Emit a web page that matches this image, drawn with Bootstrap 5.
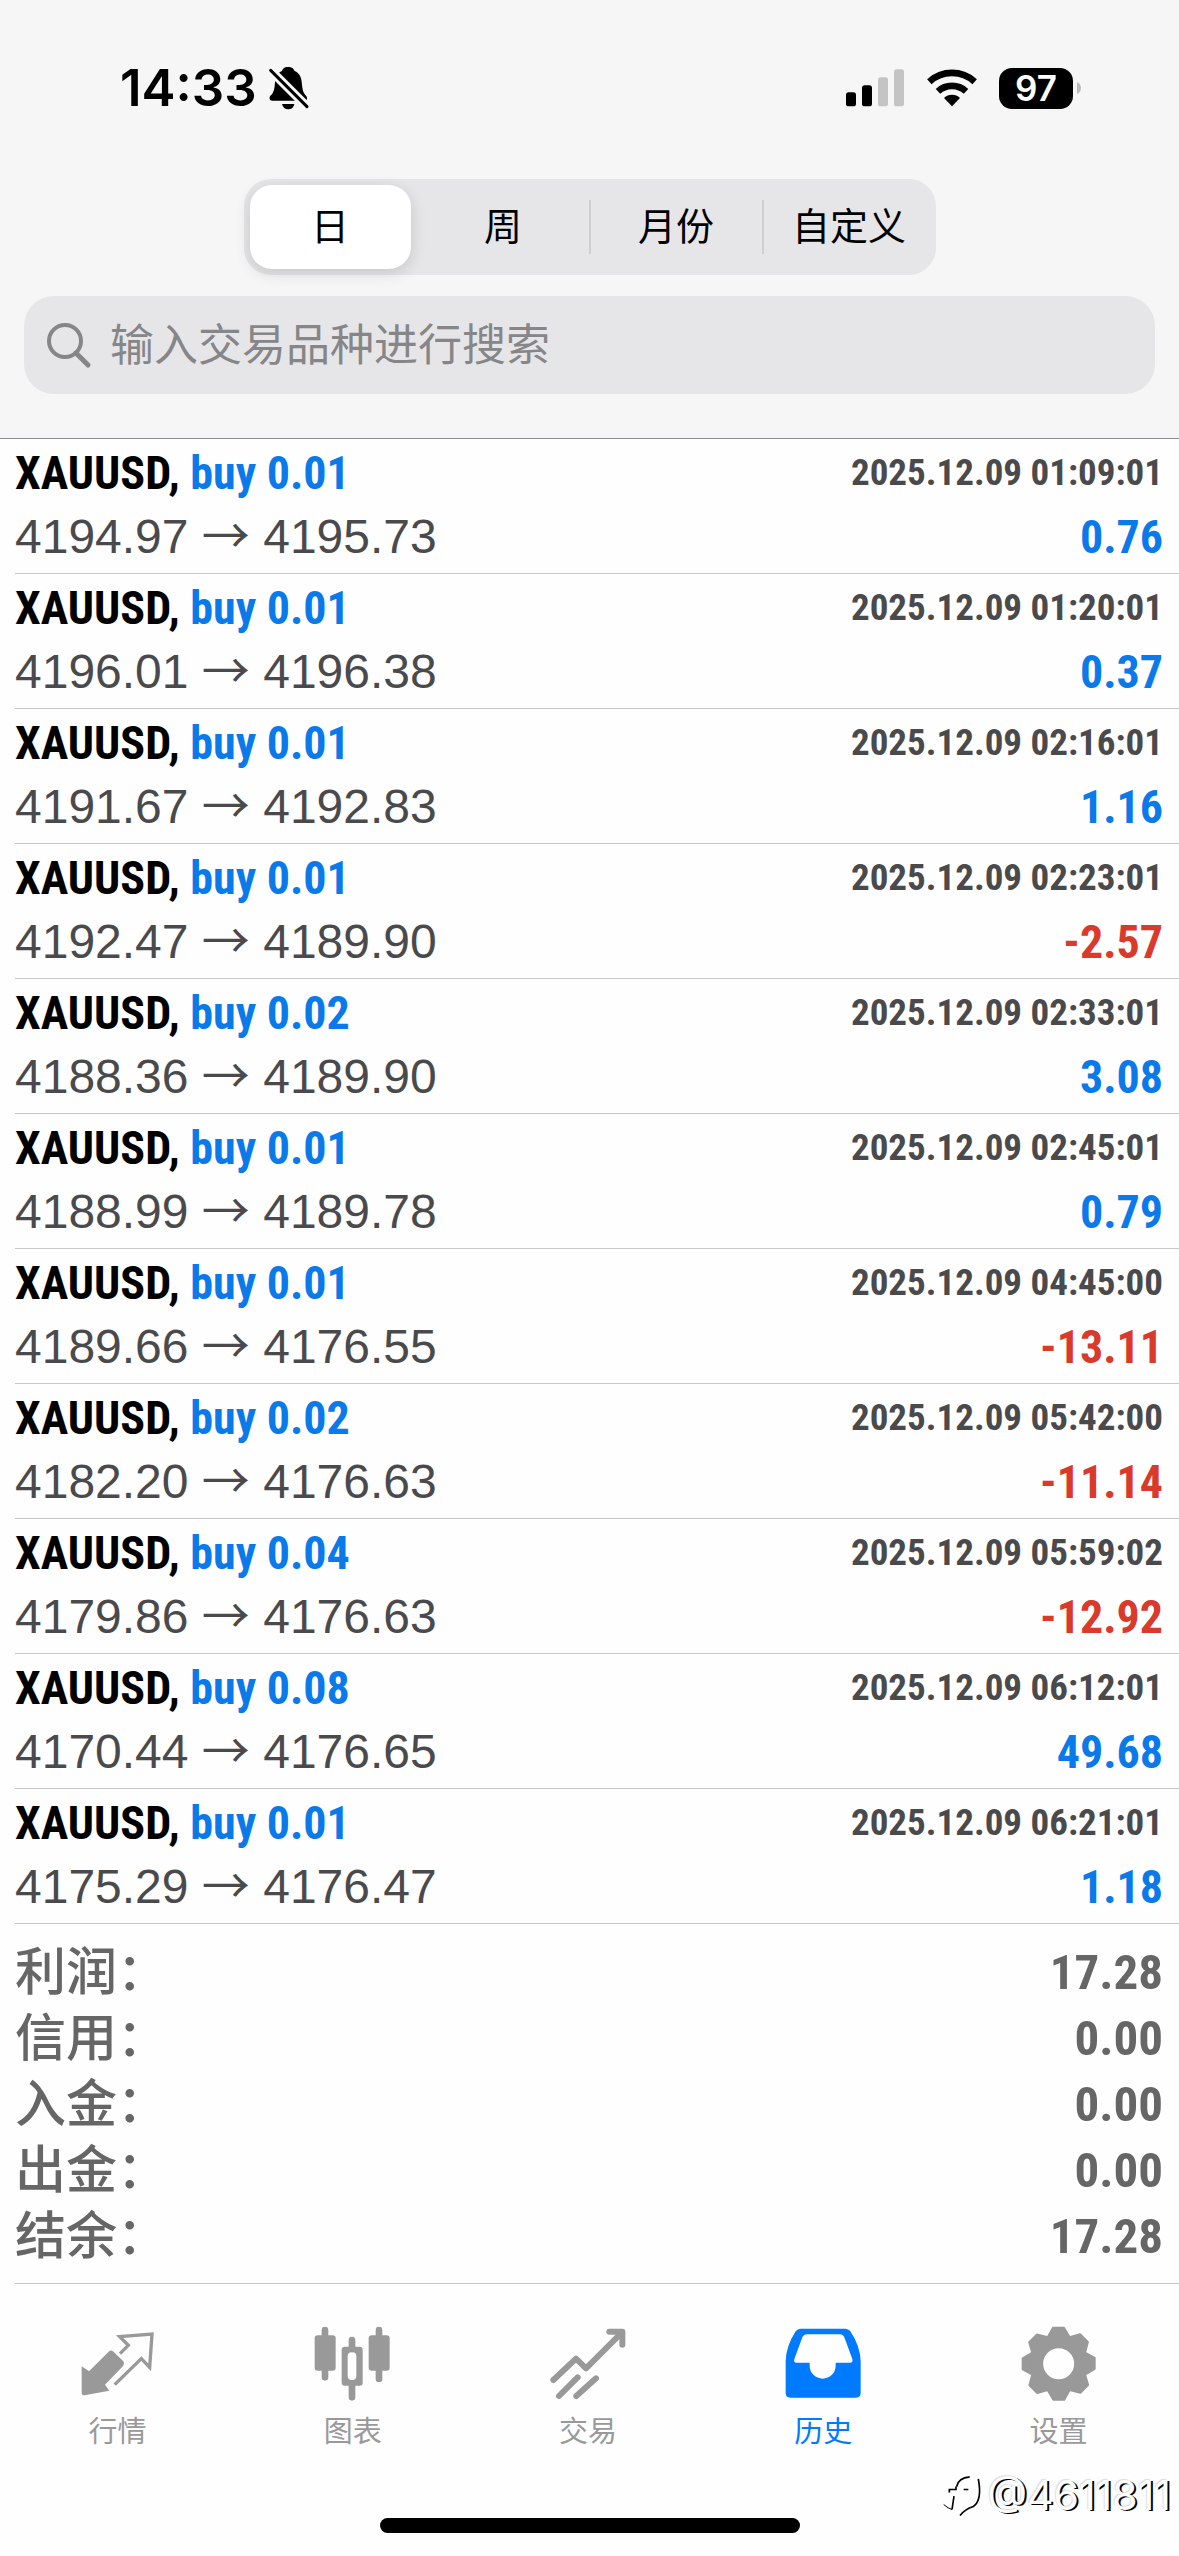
<!DOCTYPE html>
<html lang="zh-CN">
<head>
<meta charset="utf-8">
<meta name="viewport" content="width=device-width, initial-scale=1">
<title>历史</title>
<link href="https://cdn.jsdelivr.net/npm/bootstrap@5.3.0/dist/css/bootstrap.min.css" rel="stylesheet">
<style>
  :root { --gain: #0a7aea; --loss: #d93a2b; --ink: #4a4a4d; --hair: #c6c6c8; }
  body { background: #fefefe; color: #000; font-family: "Liberation Sans", "Noto Sans CJK SC", sans-serif; position: relative; }
  svg { display: block; overflow: visible; }

  .top-area { background: #f6f6f6; border-bottom: 1px solid #8e8e92; padding-bottom: 44px; }
  .status-line { padding: 60px 98px 0 120px; height: 116px; font-family: Inter, sans-serif; }
  .clock { font-size: 51px; font-weight: 600; line-height: 56px; }
  .clock-set { gap: 11px; }
  .radio-set { gap: 22px; }
  .battery { gap: 4px; }
  .battery-level { width: 74px; height: 41px; border-radius: 13px; font-size: 35px; font-weight: 600; line-height: 41px; }

  .period { max-width: 692px; height: 96px; margin-top: 63px; background: #e6e6e8; border-radius: 27px; }
  .period .btn { --bs-btn-font-size: 38px; --bs-btn-border-radius: 22px; --bs-btn-active-bg: #fff; --bs-btn-active-color: #000; --bs-btn-color: #000;
    --bs-btn-padding-x: 0; --bs-btn-padding-y: 0; --bs-btn-border-width: 0; line-height: 84px; margin: 6px; flex: 1 1 0; }
  .period .btn-check:checked + .btn { box-shadow: 0 4px 16px rgba(0, 0, 0, .14); }
  .period .vr { width: 2px; height: 54px; background: #cfcfd3; opacity: 1; margin: 0 -1px; align-self: center; }

  .finder { margin: 21px 24px 0 24px; height: 98px; background: #e6e6e8; border-radius: 30px; padding-left: 22px; color: #868689; }
  .finder .form-control { font-size: 44px; line-height: 60px; padding: 2px 20px 0; color: #000; }
  .finder .form-control::placeholder { color: #868689; opacity: 1; }

  .deal { margin-left: 15px; padding: 2px 16px 4px 0; border-bottom: 1px solid var(--hair); line-height: 64px; font-size: 48px; }
  .cond { font-family: "Roboto Condensed", "Liberation Sans Narrow", "Liberation Sans", sans-serif; font-weight: 700; font-size: 46px; }
  .stamp { font-size: 37px; color: var(--ink); }
  .quote { color: var(--ink); }
  .to { font-family: "Noto Sans CJK SC", sans-serif; font-weight: 400; line-height: 1; }
  .gain { color: var(--gain); }
  .loss { color: var(--loss); }

  .totals { margin-left: 15px; padding: 16px 16px 13px 0; border-bottom: 1px solid var(--hair); font-size: 51px; line-height: 66px; color: #666; }
  .totals dt { font-weight: 500; }
  .totals .cond { font-size: 49px; }

  .tabs { padding: 42px 3px 0 0; }
  .tabs .nav-link { padding: 0; color: #999; font-size: 29px; line-height: 36px; gap: 12px; }
  .tabs .nav-link.active { color: #007aff; }
  .home-bar { width: 420px; height: 15px; margin: 68px auto 24px; }

  .stamp-mark { position: absolute; right: 8px; bottom: 34px; gap: 6px; font-family: Inter, sans-serif; font-size: 41px; line-height: 56px; color: #fff; text-shadow: 2px 1px 0 #000, -1px -1px 1px #ddd; }
</style>
</head>
<body>
<header class="top-area">
  <div class="status-line d-flex align-items-center justify-content-between">
    <div class="clock-set d-flex align-items-center">
      <span class="clock">14:33</span>
      <svg width="42" height="44" viewBox="530 78 126 132" role="img" aria-label="静音">
        <path d="M590 81c-12 0-16 6-18 12-14 6-20 18-21 32-1 22-4 34-14 42-4 5-3 15 6 15h96c10 0 10-10 5-15-9-9-11-20-13-42-1-14-8-26-21-32-3-7-8-12-20-12zM572 192h37q-3 16-18 16t-19-16z"/>
        <path d="M532 85L655 208" stroke="#f6f6f6" stroke-width="27"/>
        <path d="M538 91L647 200" stroke="#000" stroke-width="9" stroke-linecap="round"/>
      </svg>
    </div>
    <div class="radio-set d-flex align-items-center">
      <svg width="59" height="38" viewBox="138 86 177 114" role="img" aria-label="信号">
        <rect x="138" y="156" width="30" height="42" rx="8"/><rect x="186" y="135" width="30" height="63" rx="8"/>
        <rect x="234" y="111" width="30" height="87" rx="8" fill="#c4c4c4"/><rect x="282" y="87" width="30" height="111" rx="8" fill="#c4c4c4"/>
      </svg>
      <svg width="50" height="38" viewBox="380 86 150 114" fill="none" stroke="#000" stroke-width="20" role="img" aria-label="Wi-Fi">
        <path d="M387 124A101 101 0 0 1 523 124M413 153A62 62 0 0 1 497 153"/>
        <path d="M455 198L431 173A35 35 0 0 1 479 173z" fill="#000" stroke="none"/>
      </svg>
      <div class="battery d-flex align-items-center">
        <span class="battery-level bg-black text-white text-center">97</span>
        <svg width="4" height="12" viewBox="0 0 4 12" fill="#bbb" aria-hidden="true"><path d="M0 0Q4 2 4 6T0 12z"/></svg>
      </div>
    </div>
  </div>

  <div class="period d-flex align-items-center mx-auto" role="group" aria-label="周期">
    <input type="radio" class="btn-check" name="period" id="p-day" checked><label class="btn" for="p-day">日</label>
    <input type="radio" class="btn-check" name="period" id="p-week"><label class="btn" for="p-week">周</label>
    <span class="vr"></span>
    <input type="radio" class="btn-check" name="period" id="p-month"><label class="btn" for="p-month">月份</label>
    <span class="vr"></span>
    <input type="radio" class="btn-check" name="period" id="p-custom"><label class="btn" for="p-custom">自定义</label>
  </div>

  <div class="finder d-flex align-items-center">
    <label for="symbol" aria-label="搜索"><svg width="44" height="44" viewBox="0 0 44 44" fill="none" stroke="currentColor" stroke-width="4"><circle cx="19" cy="18" r="16"/><path d="M30 30L42 42" stroke-width="5" stroke-linecap="round"/></svg></label>
    <input id="symbol" type="text" class="form-control bg-transparent border-0 shadow-none" placeholder="输入交易品种进行搜索">
  </div>
</header>

<main>
  <ul class="list-unstyled mb-0">
    <li class="deal"><div class="d-flex justify-content-between cond"><span>XAUUSD, <span class="gain">buy 0.01</span></span><time class="stamp">2025.12.09 01:09:01</time></div><div class="d-flex justify-content-between"><span class="quote">4194.97 <span class="to">→</span> 4195.73</span><span class="cond gain">0.76</span></div></li>
    <li class="deal"><div class="d-flex justify-content-between cond"><span>XAUUSD, <span class="gain">buy 0.01</span></span><time class="stamp">2025.12.09 01:20:01</time></div><div class="d-flex justify-content-between"><span class="quote">4196.01 <span class="to">→</span> 4196.38</span><span class="cond gain">0.37</span></div></li>
    <li class="deal"><div class="d-flex justify-content-between cond"><span>XAUUSD, <span class="gain">buy 0.01</span></span><time class="stamp">2025.12.09 02:16:01</time></div><div class="d-flex justify-content-between"><span class="quote">4191.67 <span class="to">→</span> 4192.83</span><span class="cond gain">1.16</span></div></li>
    <li class="deal"><div class="d-flex justify-content-between cond"><span>XAUUSD, <span class="gain">buy 0.01</span></span><time class="stamp">2025.12.09 02:23:01</time></div><div class="d-flex justify-content-between"><span class="quote">4192.47 <span class="to">→</span> 4189.90</span><span class="cond loss">-2.57</span></div></li>
    <li class="deal"><div class="d-flex justify-content-between cond"><span>XAUUSD, <span class="gain">buy 0.02</span></span><time class="stamp">2025.12.09 02:33:01</time></div><div class="d-flex justify-content-between"><span class="quote">4188.36 <span class="to">→</span> 4189.90</span><span class="cond gain">3.08</span></div></li>
    <li class="deal"><div class="d-flex justify-content-between cond"><span>XAUUSD, <span class="gain">buy 0.01</span></span><time class="stamp">2025.12.09 02:45:01</time></div><div class="d-flex justify-content-between"><span class="quote">4188.99 <span class="to">→</span> 4189.78</span><span class="cond gain">0.79</span></div></li>
    <li class="deal"><div class="d-flex justify-content-between cond"><span>XAUUSD, <span class="gain">buy 0.01</span></span><time class="stamp">2025.12.09 04:45:00</time></div><div class="d-flex justify-content-between"><span class="quote">4189.66 <span class="to">→</span> 4176.55</span><span class="cond loss">-13.11</span></div></li>
    <li class="deal"><div class="d-flex justify-content-between cond"><span>XAUUSD, <span class="gain">buy 0.02</span></span><time class="stamp">2025.12.09 05:42:00</time></div><div class="d-flex justify-content-between"><span class="quote">4182.20 <span class="to">→</span> 4176.63</span><span class="cond loss">-11.14</span></div></li>
    <li class="deal"><div class="d-flex justify-content-between cond"><span>XAUUSD, <span class="gain">buy 0.04</span></span><time class="stamp">2025.12.09 05:59:02</time></div><div class="d-flex justify-content-between"><span class="quote">4179.86 <span class="to">→</span> 4176.63</span><span class="cond loss">-12.92</span></div></li>
    <li class="deal"><div class="d-flex justify-content-between cond"><span>XAUUSD, <span class="gain">buy 0.08</span></span><time class="stamp">2025.12.09 06:12:01</time></div><div class="d-flex justify-content-between"><span class="quote">4170.44 <span class="to">→</span> 4176.65</span><span class="cond gain">49.68</span></div></li>
    <li class="deal"><div class="d-flex justify-content-between cond"><span>XAUUSD, <span class="gain">buy 0.01</span></span><time class="stamp">2025.12.09 06:21:01</time></div><div class="d-flex justify-content-between"><span class="quote">4175.29 <span class="to">→</span> 4176.47</span><span class="cond gain">1.18</span></div></li>
  </ul>
  <dl class="totals mb-0">
    <div class="d-flex justify-content-between"><dt>利润：</dt><dd class="cond mb-0">17.28</dd></div>
    <div class="d-flex justify-content-between"><dt>信用：</dt><dd class="cond mb-0">0.00</dd></div>
    <div class="d-flex justify-content-between"><dt>入金：</dt><dd class="cond mb-0">0.00</dd></div>
    <div class="d-flex justify-content-between"><dt>出金：</dt><dd class="cond mb-0">0.00</dd></div>
    <div class="d-flex justify-content-between"><dt>结余：</dt><dd class="cond mb-0">17.28</dd></div>
  </dl>
</main>

<footer>
  <nav class="tabs nav nav-fill nav-justified flex-nowrap">
    <a class="nav-link d-flex flex-column align-items-center" href="#quotes">
      <svg width="76" height="76" viewBox="118 76 228 228" aria-hidden="true"><path d="M123 197l22 15 59-59q7-6 13-1l31 30q5 7 0 13l-55 57 13 18-74 14q-9 0-9-7z" fill="currentColor"/><path d="M238 159l25-25-26-26 97-8-7 100-25-26-80 78" fill="none" stroke="currentColor" stroke-width="10"/></svg>
      行情</a>
    <a class="nav-link d-flex flex-column align-items-center" href="#charts">
      <svg width="76" height="76" viewBox="826 76 228 228" fill="currentColor" aria-hidden="true"><path d="M856 88V230M1018 88V235M937 118V290" stroke="currentColor" stroke-width="20" stroke-linecap="round"/><rect x="825" y="104" width="63" height="106" rx="9"/><rect x="987" y="104" width="63" height="106" rx="9"/><rect x="906" y="138" width="63" height="117" rx="9"/><rect x="924" y="155" width="26" height="83" rx="12" fill="#fefefe"/></svg>
      图表</a>
    <a class="nav-link d-flex flex-column align-items-center" href="#trade">
      <svg width="76" height="76" viewBox="152 76 228 228" fill="none" stroke="currentColor" stroke-width="18" stroke-linecap="round" aria-hidden="true"><path d="M162 238L230 174L260 203L365 98" stroke-linejoin="round"/><path d="M330 93H369V132M179 286L235 230M231 286L290 233" stroke-linejoin="round"/></svg>
      交易</a>
    <a class="nav-link active d-flex flex-column align-items-center" href="#history" aria-current="page">
      <svg width="76" height="76" viewBox="856 79 228 228" fill="currentColor" aria-hidden="true"><path d="M903 87H1037q10 0 15 8 30 45 31 90V280q0 14-14 14H872q-14 0-14-14V185q1-45 30-90 5-8 15-8z"/><path d="M922 104h98q10 0 14 9l24 65q3 11-7 11h-43v9a39 39 0 0 1-78 0v-9h-40q-9 0-6-11l24-65q4-9 14-9z" fill="#fefefe"/></svg>
      历史</a>
    <a class="nav-link d-flex flex-column align-items-center" href="#settings">
      <svg width="76" height="76" viewBox="363 78 228 228" aria-hidden="true">
        <defs><path id="tooth" d="M462 83H495L512 112H446z" fill="currentColor" stroke="currentColor" stroke-width="6" stroke-linejoin="round"/></defs>
        <circle cx="479" cy="191" r="67" fill="none" stroke="currentColor" stroke-width="41"/>
        <use href="#tooth"/><use href="#tooth" transform="rotate(45 479 191)"/><use href="#tooth" transform="rotate(90 479 191)"/><use href="#tooth" transform="rotate(135 479 191)"/><use href="#tooth" transform="rotate(180 479 191)"/><use href="#tooth" transform="rotate(225 479 191)"/><use href="#tooth" transform="rotate(270 479 191)"/><use href="#tooth" transform="rotate(315 479 191)"/>
      </svg>
      设置</a>
  </nav>
  <div class="home-bar bg-black rounded-pill"></div>
</footer>

<div class="stamp-mark d-flex align-items-center">
  <svg width="38" height="41" viewBox="134 534 114 122" fill="none" stroke="#000" stroke-width="5" aria-hidden="true"><path d="M175 568Q180 542 214 539M196 577h14M153 586v-9h20v-9M167 597L161 637"/><path d="M161 637Q150 634 136 622" stroke-width="3"/><path d="M240 545Q252 610 225 628 200 636 185 655"/></svg>
  <span>@4611811</span>
</div>
<script src="https://cdn.jsdelivr.net/npm/bootstrap@5.3.0/dist/js/bootstrap.bundle.min.js"></script>
</body>
</html>
